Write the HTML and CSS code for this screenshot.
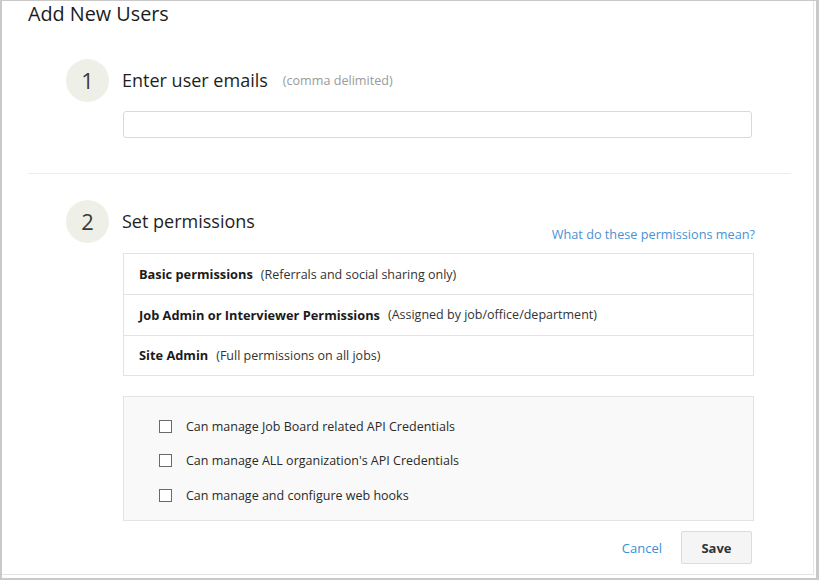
FILE: index.html
```html
<!DOCTYPE html>
<html>
<head>
<meta charset="utf-8">
<link rel="stylesheet" href="styles.css">
</head>
<body>
<div class="frame">
  <h1 class="title">Add New Users</h1>
  <section class="step step-one">
    <div class="step-head">
      <span class="num">1</span>
      <span class="step-title">Enter user emails</span>
      <span class="hint">(comma delimited)</span>
    </div>
    <input class="emails" type="text">
  </section>
  <hr class="divider">
  <section class="step step-two">
    <div class="step-head">
      <span class="num">2</span>
      <span class="step-title">Set permissions</span>
    </div>
    <div class="link-row"><a class="help" href="#">What do these permissions mean?</a></div>
    <div class="perms">
      <div class="perm"><b>Basic permissions</b><span class="desc">(Referrals and social sharing only)</span></div>
      <div class="perm"><b>Job Admin or Interviewer Permissions</b><span class="desc">(Assigned by job/office/department)</span></div>
      <div class="perm"><b>Site Admin</b><span class="desc">(Full permissions on all jobs)</span></div>
    </div>
    <div class="checks">
      <label class="check"><span class="box"></span>Can manage Job Board related API Credentials</label>
      <label class="check"><span class="box"></span>Can manage ALL organization's API Credentials</label>
      <label class="check"><span class="box"></span>Can manage and configure web hooks</label>
    </div>
    <div class="actions">
      <a class="cancel" href="#">Cancel</a>
      <button class="save">Save</button>
    </div>
  </section>
</div>
</body>
</html>
```
FILE: styles.css
```css
* { box-sizing: border-box; }
html, body { margin: 0; padding: 0; background: #fff; }
body { font-family: "Open Sans", "Noto Sans", sans-serif; color: #222; }
.frame {
  width: 819px;
  height: 580px;
  border: 2px solid #c9c9c9;
  border-width: 1px 3px 2px 2px;
  box-shadow: inset -2px -3px 0 #fff, inset -3px -4px 0 #e4e4e4;
  padding: 0 0 0 26px;
  overflow: hidden;
}
.title {
  margin: 0;
  font-size: 19.8px;
  font-weight: 400;
  line-height: 26px;
  color: #1c1c1c;
}
.step { padding-left: 38px; }
.step-one { padding-top: 31px; }
.step-head { display: flex; align-items: center; height: 44px; }
.num {
  width: 43px; height: 43px; border-radius: 50%;
  background: #eef0e8;
  display: flex; align-items: center; justify-content: center;
  font-size: 22px; color: #3b3b35;
  margin-right: 13px;
}
.step-title { font-size: 18px; color: #1e1e1e; }
.hint { font-size: 12.6px; color: #9a9a9a; margin-left: 15px; margin-top: 1px; }
.emails {
  display: block;
  margin: 9px 0 0 57px;
  width: 629px; height: 27px;
  border: 1px solid #d9d9d9; border-radius: 3px;
  background: #fff;
}
.divider {
  border: 0; border-top: 1px solid #ececec;
  margin: 35px 0 0 0; width: 763px;
}
.step-two { padding-top: 25px; }
.link-row { display: flex; justify-content: flex-end; width: 689px; margin-top: -18px; height: 28px; }
.help { font-size: 12.7px; color: #4a92d4; text-decoration: none; }
.perms {
  margin: 0 0 0 57px; width: 631px;
  border: 1px solid #e3e3e3;
}
.perm {
  height: 40.5px; display: flex; align-items: center;
  padding-left: 15px; font-size: 12.8px; color: #1b1b1b;
  border-top: 1px solid #e3e3e3;
}
.perm:first-child { border-top: 0; height: 40px; }
.perm b { font-weight: 700; }
.desc { margin-left: 8px; color: #333; font-size: 12.5px; }
.checks {
  margin: 20px 0 0 57px; width: 631px; height: 125px;
  border: 1px solid #e3e3e3; background: #f9f9f9;
  padding: 19px 0 0 35px;
  display: flex; flex-direction: column; gap: 14.5px;
}
.check { display: flex; align-items: center; font-size: 12.5px; color: #2a2a2a; height: 20px; }
.box {
  width: 13px; height: 13px; border: 1px solid #6a6a6a; background: #fff;
  margin-right: 14px;
}
.actions {
  width: 686px; display: flex; justify-content: flex-end; align-items: center;
  margin-top: 10px;
}
.cancel { font-size: 13px; color: #3b8fd3; text-decoration: none; margin-right: 19px; }
.save {
  width: 71px; height: 33px;
  border: 1px solid #dcdcdc; border-radius: 2px; background: #f5f5f5;
  font-family: inherit; font-weight: 700; font-size: 13px; color: #333;
}
```
